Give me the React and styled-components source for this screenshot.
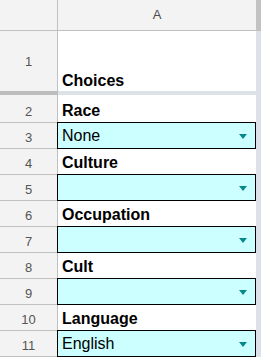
import React from "react";
import styled, { createGlobalStyle } from "styled-components";

const Global = createGlobalStyle`
  html, body { margin: 0; padding: 0; background: #ffffff; }
  body { font-family: "Liberation Sans", Arial, sans-serif; }
`;

const Sheet = styled.div`
  width: 261px;
  height: 357px;
  overflow: hidden;
  display: flex;
  flex-direction: column;
  background: #ffffff;
`;

const Line = styled.div`
  display: flex;
  height: ${(p) => p.$h}px;
  flex: none;
`;

const Corner = styled.div`
  width: 58px;
  box-sizing: border-box;
  background: #f3f3f3;
  border-right: 1px solid #c0c0c0;
  border-bottom: 1px solid #c0c0c0;
`;

const ColHead = styled.div`
  width: 198px;
  box-sizing: border-box;
  background: #f3f3f3;
  border-bottom: 1px solid #c0c0c0;
  display: flex;
  align-items: center;
  justify-content: center;
  font-size: 13px;
  color: #4a4a4a;
  padding-bottom: 1px;
`;

const Scroll = styled.div`
  width: 5px;
  flex: none;
  background: ${(p) => (p.$top ? "#c2c2c2" : "#dde1e8")};
`;

const RowHead = styled.div`
  width: 58px;
  flex: none;
  box-sizing: border-box;
  background: #f3f3f3;
  border-right: 1px solid #c0c0c0;
  border-bottom: ${(p) => (p.$tall ? "none" : "1px solid #c0c0c0")};
  display: flex;
  align-items: ${(p) => (p.$tall ? "center" : "flex-end")};
  justify-content: center;
  padding-bottom: ${(p) => (p.$tall ? 0 : 3)}px;
  font-size: 13px;
  color: #555555;
`;

const Label = styled.div`
  width: 198px;
  box-sizing: border-box;
  display: flex;
  align-items: flex-end;
  padding: 0 4px ${(p) => (p.$tall ? 1 : 3)}px 4px;
  font-size: 16px;
  font-weight: bold;
  color: #000000;
  white-space: nowrap;
`;

const Divider = styled.div`
  display: flex;
  height: 4px;
  flex: none;
`;

const DividerHead = styled.div`
  width: 58px;
  background: #bdbdbd;
`;

const DividerBody = styled.div`
  width: 203px;
  background: #dde1e8;
`;

const Choice = styled.div`
  width: 200px;
  height: 27px;
  margin: -1px 0 0 -1px;
  box-sizing: border-box;
  border: 1px solid #000000;
  background: #ccffff;
  display: flex;
  align-items: center;
  justify-content: space-between;
  padding: 1px 8px 0 4px;
  font-size: 16px;
  color: #000000;
  position: relative;
`;

const Arrow = styled.span`
  width: 0;
  height: 0;
  border-left: 4.5px solid transparent;
  border-right: 4.5px solid transparent;
  border-top: 5px solid #05898a;
`;

const sections = [
  { label: "Race", value: "None" },
  { label: "Culture", value: "" },
  { label: "Occupation", value: "" },
  { label: "Cult", value: "" },
  { label: "Language", value: "English" },
];

export default function App() {
  let n = 2;
  return (
    <>
      <Global />
      <Sheet>
        <Line $h={31}>
          <Corner />
          <ColHead>A</ColHead>
          <Scroll $top />
        </Line>
        <Line $h={60}>
          <RowHead $tall>1</RowHead>
          <Label $tall>Choices</Label>
          <Scroll />
        </Line>
        <Divider>
          <DividerHead />
          <DividerBody />
        </Divider>
        {sections.map((s, i) => (
          <React.Fragment key={s.label}>
            <Line $h={i === 0 ? 28 : 26}>
              <RowHead>{n++}</RowHead>
              <Label>{s.label}</Label>
              <Scroll />
            </Line>
            <Line $h={26}>
              <RowHead>{n++}</RowHead>
              <Choice>
                <span>{s.value}</span>
                <Arrow />
              </Choice>
              <Scroll />
            </Line>
          </React.Fragment>
        ))}
      </Sheet>
    </>
  );
}
